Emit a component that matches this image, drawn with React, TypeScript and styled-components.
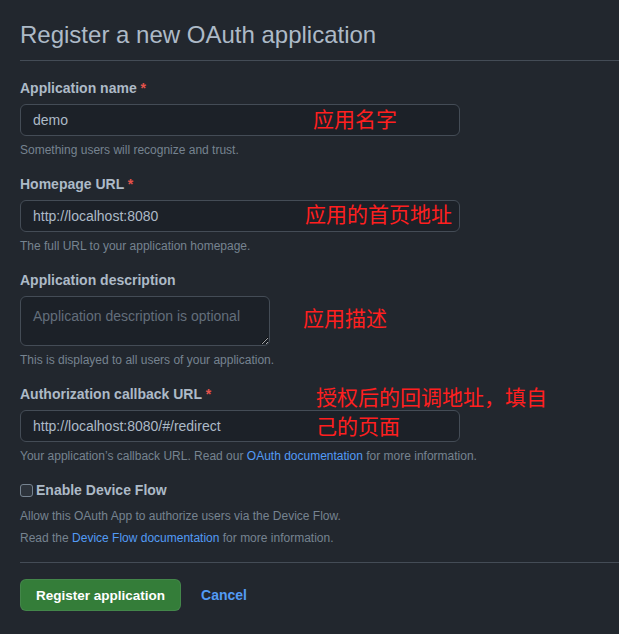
import React from 'react';
import styled, { createGlobalStyle } from 'styled-components';

const GlobalStyle = createGlobalStyle`
  html, body {
    margin: 0;
    padding: 0;
    background: #22272e;
  }
  body {
    font-family: "Liberation Sans", Arial, "Noto Sans CJK SC", sans-serif;
    color: #adbac7;
  }
`;

interface fieldI {
  label: string
  required?: boolean
  value?: string
  placeholder?: string
  multiline?: boolean
  note: React.ReactNode
  memo?: string
  memoLeft: number
  memoTop: number
  memoWidth?: number
}

// styled 컴포넌트가 아래에 선언돼 있어서 렌더 시점에 만든다
const getFields = (): fieldI[] => [
  {
    label: 'Application name',
    required: true,
    value: 'demo',
    note: 'Something users will recognize and trust.',
    memo: '应用名字',
    memoLeft: 293,
    memoTop: 26,
  },
  {
    label: 'Homepage URL',
    required: true,
    value: 'http://localhost:8080',
    note: 'The full URL to your application homepage.',
    memo: '应用的首页地址',
    memoLeft: 285,
    memoTop: 25,
  },
  {
    label: 'Application description',
    placeholder: 'Application description is optional',
    multiline: true,
    note: 'This is displayed to all users of your application.',
    memo: '应用描述',
    memoLeft: 283,
    memoTop: 33,
  },
  {
    label: 'Authorization callback URL',
    required: true,
    value: 'http://localhost:8080/#/redirect',
    note: (
      <>
        Your application’s callback URL. Read our <Link>OAuth documentation</Link> for more information.
      </>
    ),
    memo: '授权后的回调地址，填自己的页面',
    memoLeft: 296,
    memoTop: -2,
    memoWidth: 236,
  },
];

const App = () => {
  const fields = getFields();

  return (
    <Page>
      <GlobalStyle />
      <Heading>Register a new OAuth application</Heading>
      <Form>
        {fields.map((f) => (
          <Field key={f.label}>
            <Label>
              {f.label}
              {f.required && <Star> *</Star>}
            </Label>
            {f.multiline ? (
              <TextArea placeholder={f.placeholder} readOnly />
            ) : (
              <Input type="text" defaultValue={f.value} />
            )}
            <Note>{f.note}</Note>
            {f.memo && (
              <Memo style={{ left: f.memoLeft, top: f.memoTop, width: f.memoWidth }}>{f.memo}</Memo>
            )}
          </Field>
        ))}
        <CheckRow>
          <CheckBox type="checkbox" />
          Enable Device Flow
        </CheckRow>
        <CheckNotes>
          <SmallText>Allow this OAuth App to authorize users via the Device Flow.</SmallText>
          <SmallText>
            Read the <Link>Device Flow documentation</Link> for more information.
          </SmallText>
        </CheckNotes>
      </Form>
      <Footer>
        <PrimaryBtn>Register application</PrimaryBtn>
        <CancelLink>Cancel</CancelLink>
      </Footer>
    </Page>
  );
};

export default App;

const Page = styled.div`
  width: 619px;
  height: 634px;
  box-sizing: border-box;
  padding: 20px 0 0 20px;
  overflow: hidden;
`;

const Heading = styled.h2`
  margin: 0;
  padding-bottom: 10px;
  border-bottom: 1px solid #444c56;
  font-size: 24px;
  font-weight: 400;
  line-height: 30px;
  color: #adbac7;
`;

const Form = styled.div`
  display: flex;
  flex-direction: column;
  padding-top: 17px;
  padding-bottom: 15px;
  border-bottom: 1px solid #444c56;
`;

const Field = styled.div`
  position: relative;
  display: flex;
  flex-direction: column;
  align-items: flex-start;
  margin-bottom: 15px;
`;

const Label = styled.label`
  font-size: 14px;
  font-weight: 700;
  line-height: 20px;
  margin-bottom: 6px;
  color: #adbac7;
`;

const Star = styled.span`
  color: #e5534b;
`;

const Input = styled.input`
  box-sizing: border-box;
  width: 440px;
  height: 32px;
  padding: 5px 12px;
  font-family: inherit;
  font-size: 14px;
  color: #adbac7;
  background: #1c2128;
  border: 1px solid #444c56;
  border-radius: 6px;
  outline: none;
`;

const TextArea = styled.textarea`
  box-sizing: border-box;
  width: 250px;
  height: 50px;
  padding: 11px 12px 4px;
  font-family: inherit;
  font-size: 14px;
  color: #adbac7;
  background: #1c2128;
  border: 1px solid #444c56;
  border-radius: 6px;
  outline: none;
  resize: both;
  &::placeholder {
    color: #636e7b;
  }
`;

const Note = styled.p`
  margin: 5px 0 0;
  font-size: 12px;
  line-height: 18px;
  color: #768390;
`;

const Link = styled.a`
  color: #539bf5;
  cursor: pointer;
`;

const Memo = styled.div`
  position: absolute;
  font-family: "Noto Sans CJK SC", sans-serif;
  font-size: 21px;
  line-height: 29px;
  color: #ff1f1f;
  pointer-events: none;
`;

const CheckRow = styled.label`
  display: flex;
  align-items: center;
  gap: 3px;
  font-size: 14px;
  font-weight: 700;
  line-height: 20px;
  color: #adbac7;
`;

const CheckBox = styled.input`
  appearance: none;
  width: 13px;
  height: 13px;
  margin: 0;
  border: 1px solid #768390;
  border-radius: 3px;
  background: #2d333b;
`;

const CheckNotes = styled.div`
  display: flex;
  flex-direction: column;
  gap: 3px;
  margin-top: 7px;
  & > p:last-child {
    margin-top: 1px;
  }
`;

const SmallText = styled.p`
  margin: 0;
  font-size: 12px;
  line-height: 18px;
  color: #768390;
`;

const Footer = styled.div`
  display: flex;
  align-items: center;
  gap: 20px;
  padding-top: 16px;
`;

const PrimaryBtn = styled.button`
  box-sizing: border-box;
  height: 32px;
  padding: 0 15px;
  font-family: inherit;
  font-size: 13.5px;
  font-weight: 700;
  color: #ffffff;
  background: #347d39;
  border: 1px solid rgba(205, 217, 229, 0.1);
  border-radius: 6px;
  cursor: pointer;
`;

const CancelLink = styled.a`
  font-size: 14px;
  font-weight: 700;
  color: #539bf5;
  cursor: pointer;
`;
